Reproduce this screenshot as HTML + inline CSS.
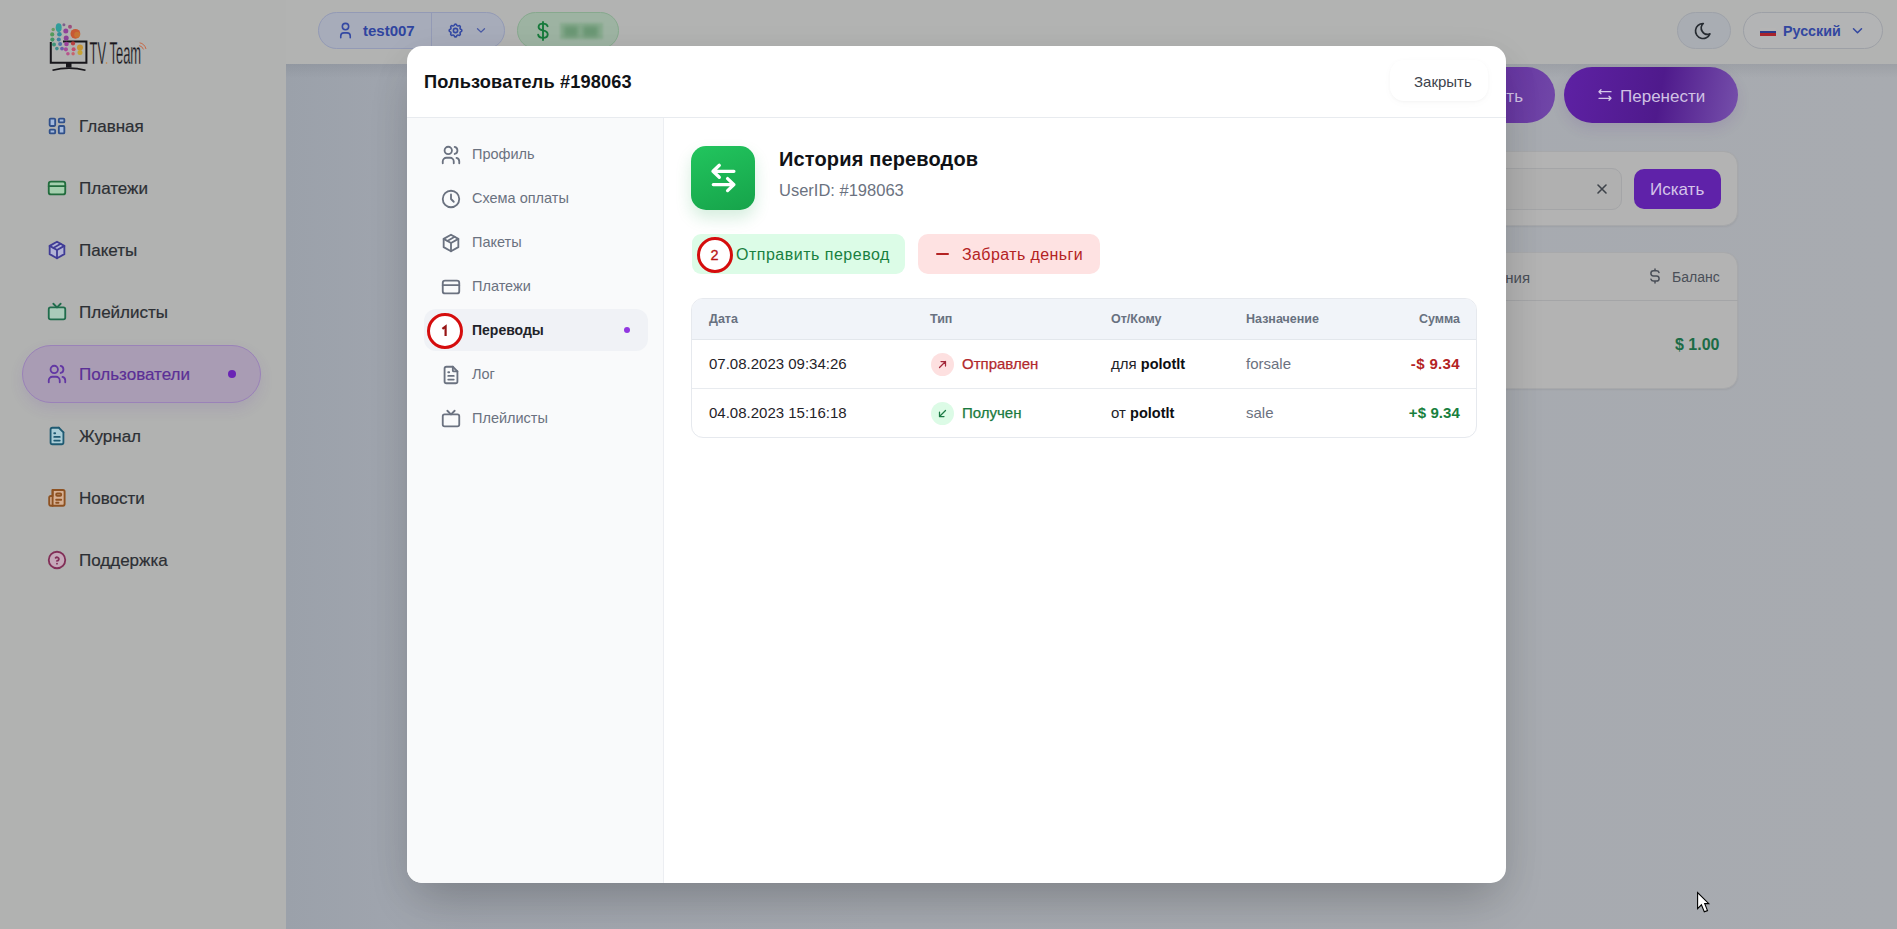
<!DOCTYPE html>
<html><head><meta charset="utf-8">
<style>
*{box-sizing:border-box;margin:0;padding:0}
html,body{width:1897px;height:929px;overflow:hidden}
body{font-family:"Liberation Sans",sans-serif;background:#a7aab0;position:relative}
.abs{position:absolute}
svg{display:block;overflow:visible}
#sidebar{left:0;top:0;width:286px;height:929px;background:#b1b2b1}
#header{left:286px;top:0;width:1611px;height:64px;background:#b2b3b2}
#main{left:286px;top:64px;width:1611px;height:865px;background:linear-gradient(90deg,#9ba1aa 0px,#a0a5ae 120px,#a5a9b0 600px,#a8abb0 1611px)}
.nav{position:absolute;left:46px;width:230px;height:22px;font-size:17px;color:#2c2f34;white-space:nowrap}
.nav svg{position:absolute;left:0;top:0}
.nav span{position:absolute;left:33px;top:2px;line-height:20px;-webkit-text-stroke:.2px currentColor}
.pill{position:absolute;border-radius:20px}
#modal{left:407px;top:46px;width:1099px;height:837px;background:#fff;border-radius:15px;box-shadow:0 25px 50px -12px rgba(0,0,0,.2),0 10px 40px rgba(0,0,0,.06);overflow:hidden}
.mnav{position:absolute;left:32.5px;width:210px;height:21px;font-size:14.5px;color:#6b7280;white-space:nowrap}
.mnav svg{position:absolute;left:0;top:0}
.mnav span{position:absolute;left:32.5px;top:0px;line-height:20px}
.th{position:absolute;top:12px;font-size:12.5px;font-weight:700;color:#687180;line-height:16px}
.td{position:absolute;font-size:15px;line-height:18px;white-space:nowrap}
</style></head>
<body>
<div id="main" class="abs">
  <div class="abs" style="left:0;top:0;width:1611px;height:14px;background:linear-gradient(rgba(60,65,75,.10),rgba(60,65,75,0))"></div>
  <!-- purple buttons -->
  <div class="abs" style="left:1080px;top:3px;width:189px;height:56px;border-radius:28px;background:linear-gradient(100deg,#5a1f9c 0%,#5b2199 40%,#7148a8 100%)"></div>
  <div class="abs" style="right:374px;top:22.5px;font-size:17px;color:#d0c2e4;line-height:20px">Добавить</div>
  <div class="abs" style="left:1278px;top:3px;width:174px;height:56px;border-radius:28px;background:linear-gradient(100deg,#5e21a4 0%,#4f1a8c 55%,#7650ab 100%);box-shadow:0 6px 14px rgba(80,30,140,.12)"></div>
  <svg class="abs" style="left:1311px;top:23px" width="16" height="16" viewBox="0 0 24 24" fill="none" stroke="#d4c6e8" stroke-width="2" stroke-linecap="round" stroke-linejoin="round"><path d="M21 7H3M6 10L3 7l3-3M3 17h18M18 20l3-3l-3-3"/></svg>
  <div class="abs" style="left:1334px;top:22.5px;font-size:17px;color:#d0c2e4;line-height:20px">Перенести</div>
  <!-- search card -->
  <div class="abs" style="left:1080px;top:87px;width:372px;height:75px;border-radius:14px;background:#b3b3b3;border:1px solid #a7a8aa;box-shadow:0 1px 2px rgba(0,0,0,.06)"></div>
  <div class="abs" style="left:1100px;top:104px;width:236px;height:42px;border-radius:10px;background:#b0b0b0;border:1px solid #a4a5a7"></div>
  <svg class="abs" style="left:1310px;top:119px" width="12" height="12" viewBox="0 0 12 12" fill="none" stroke="#3e434a" stroke-width="1.6" stroke-linecap="round"><path d="M2 2l8 8M10 2l-8 8"/></svg>
  <div class="abs" style="left:1348px;top:105px;width:87px;height:40px;border-radius:10px;background:#5f22a9"></div>
  <div class="abs" style="left:1364px;top:116px;font-size:17px;color:#d5c4ea;line-height:20px">Искать</div>
  <!-- table card -->
  <div class="abs" style="left:1080px;top:188px;width:372px;height:137px;border-radius:14px;background:#b3b3b3;border:1px solid #a8a9ab;box-shadow:0 1px 2px rgba(0,0,0,.06)"></div>
  <div class="abs" style="left:1080px;top:236px;width:372px;height:1px;background:#a4a5a7"></div>
  <div class="abs" style="right:367px;top:204px;font-size:15px;color:#4a4f58;line-height:20px">Назначения</div>
  <svg class="abs" style="left:1363px;top:204px" width="12" height="16" viewBox="0 0 12 16" fill="none" stroke="#4a4f58" stroke-width="1.5" stroke-linecap="round"><path d="M10 4.5a2.6 2.6 0 0 0-2.5-1.8h-3a2.6 2.6 0 0 0 0 5.2h3a2.6 2.6 0 0 1 0 5.2h-3A2.6 2.6 0 0 1 2 11.3M6 1v1.7m0 10.6V15"/></svg>
  <div class="abs" style="left:1386px;top:203px;font-size:14px;color:#4a4f58;line-height:20px">Баланс</div>
  <div class="abs" style="left:1389px;top:271px;font-size:16px;font-weight:700;color:#1c6b46;line-height:20px">$ 1.00</div>
</div>
<div id="header" class="abs">
  <!-- user pill -->
  <div class="abs" style="left:32px;top:12px;width:187px;height:37px;border-radius:19px;background:#a7acba;border:1px solid #939ab5"></div>
  <div class="abs" style="left:145px;top:13px;width:1px;height:35px;background:#939ab5"></div>
  <svg class="abs" style="left:50px;top:21px" width="19" height="19" viewBox="0 0 24 24" fill="none" stroke="#3449a3" stroke-width="2" stroke-linecap="round" stroke-linejoin="round"><circle cx="12" cy="7" r="4"/><path d="M6 21v-2a4 4 0 0 1 4-4h4a4 4 0 0 1 4 4v2"/></svg>
  <div class="abs" style="left:77px;top:21px;font-size:15px;font-weight:700;color:#2f449f;line-height:20px">test007</div>
  <svg class="abs" style="left:161px;top:22px" width="17" height="17" viewBox="0 0 24 24" fill="none" stroke="#3449a3" stroke-width="2.2" stroke-linecap="round" stroke-linejoin="round"><path d="M10.325 4.317c.426-1.756 2.924-1.756 3.35 0a1.724 1.724 0 0 0 2.573 1.066c1.543-.94 3.31.826 2.37 2.37a1.724 1.724 0 0 0 1.065 2.572c1.756.426 1.756 2.924 0 3.35a1.724 1.724 0 0 0-1.066 2.573c.94 1.543-.826 3.31-2.37 2.37a1.724 1.724 0 0 0-2.572 1.065c-.426 1.756-2.924 1.756-3.35 0a1.724 1.724 0 0 0-2.573-1.066c-1.543.94-3.31-.826-2.37-2.37a1.724 1.724 0 0 0-1.065-2.572c-1.756-.426-1.756-2.924 0-3.35a1.724 1.724 0 0 0 1.066-2.573c-.94-1.543.826-3.31 2.37-2.37c1 .608 2.296.07 2.572-1.065z"/><circle cx="12" cy="12" r="3"/></svg>
  <svg class="abs" style="left:190px;top:27px" width="10" height="7" viewBox="0 0 10 7" fill="none" stroke="#4a5aa5" stroke-width="1.3" stroke-linecap="round" stroke-linejoin="round"><path d="M1.5 1.8l3.5 3.3l3.5-3.3"/></svg>
  <!-- balance pill -->
  <div class="abs" style="left:231px;top:12px;width:102px;height:37px;border-radius:19px;background:#9db3a2;border:1px solid #87a98e"></div>
  <svg class="abs" style="left:250px;top:21px" width="14" height="20" viewBox="0 0 14 20" fill="none" stroke="#187a3c" stroke-width="1.9" stroke-linecap="round" stroke-linejoin="round"><path d="M11.6 5.2C11 3.5 9.4 2.6 7.1 2.6C4.4 2.6 2.6 3.9 2.6 5.9C2.6 8 4.4 8.8 7 9.4C9.8 10 11.7 10.9 11.7 13.3C11.7 15.5 9.7 16.9 7 16.9C4.4 16.9 2.6 15.8 2.2 13.8"/><path d="M7 1V19"/></svg>
  <div class="abs" style="left:274px;top:23px;width:43px;height:16px;background:#8aab90;filter:blur(1.2px)"></div>
  <div class="abs" style="left:278px;top:26px;width:14px;height:11px;background:#6a9774;filter:blur(2px)"></div>
  <div class="abs" style="left:297px;top:26px;width:15px;height:11px;background:#6a9774;filter:blur(2px)"></div>
  <!-- moon -->
  <div class="abs" style="left:1391px;top:12px;width:54px;height:37px;border-radius:19px;background:#a9adb3;border:1px solid #9ea2a9"></div>
  <svg class="abs" style="left:1407px;top:21px" width="20" height="20" viewBox="0 0 24 24" fill="none" stroke="#262b31" stroke-width="2" stroke-linecap="round" stroke-linejoin="round"><path d="M12 3c.132 0 .263 0 .393 0a7.5 7.5 0 0 0 7.92 12.446a9 9 0 1 1-8.313-12.454z"/></svg>
  <!-- lang -->
  <div class="abs" style="left:1457px;top:12px;width:140px;height:37px;border-radius:19px;background:#b3b4b5;border:1px solid #9da0a6"></div>
  <div class="abs" style="left:1474px;top:28px;width:16px;height:8px;background:linear-gradient(#b5b5b5 0 33%,#2b3a8a 33% 66%,#a8242c 66% 100%)"></div>
  <div class="abs" style="left:1497px;top:21px;font-size:14.3px;font-weight:700;color:#3247a0;line-height:20px">Русский</div>
  <svg class="abs" style="left:1566px;top:27px" width="11" height="8" viewBox="0 0 11 8" fill="none" stroke="#3247a0" stroke-width="1.5" stroke-linecap="round" stroke-linejoin="round"><path d="M1.5 1.8l4 4l4-4"/></svg>
</div>
<div id="sidebar" class="abs">
  <!-- logo -->
  <svg class="abs" style="left:0;top:0" width="160" height="80" viewBox="0 0 160 80">
    <path d="M50.8 42V62.8H86.4V41.4H63" fill="none" stroke="#17161b" stroke-width="2"/>
    <rect x="66" y="63" width="5.5" height="4.5" fill="#17161b"/>
    <path d="M52.5 70.3 Q69 66 85.5 70.3" fill="none" stroke="#17161b" stroke-width="1.6"/>
    <g opacity=".95">
      <circle cx="53.2" cy="29.5" r="1.7" fill="#6a9a60"/>
      <circle cx="52.2" cy="34.4" r="2.1" fill="#4f9a58"/>
      <circle cx="52.4" cy="39.6" r="2.1" fill="#3f9462"/>
      <circle cx="54" cy="44.6" r="2" fill="#3a9478"/>
      <circle cx="56.9" cy="48.6" r="1.8" fill="#3a8a8a"/>
      <ellipse cx="58.7" cy="27.6" rx="3" ry="4.4" fill="#2a9c9a"/>
      <circle cx="59.4" cy="34.3" r="2.3" fill="#2c8c9a"/>
      <circle cx="58.8" cy="39.5" r="2.1" fill="#3a7fa0"/>
      <circle cx="60.1" cy="44.1" r="2" fill="#4a6fa8"/>
      <circle cx="62" cy="48.6" r="1.9" fill="#6a5aa8"/>
      <circle cx="63.9" cy="24.8" r="1.5" fill="#7a5a8a"/>
      <circle cx="65.8" cy="31.1" r="2.5" fill="#8e3c98"/>
      <circle cx="66.2" cy="38.1" r="2.5" fill="#8a3a96"/>
      <circle cx="66.5" cy="44" r="2.3" fill="#9a3a98"/>
      <circle cx="65.9" cy="49.3" r="2.1" fill="#a8459a"/>
      <circle cx="67.9" cy="53.8" r="1.8" fill="#b8508a"/>
      <circle cx="70" cy="26.7" r="2" fill="#9a4a7a"/>
      <circle cx="75.4" cy="33.8" r="4.9" fill="#c9552e"/>
      <circle cx="77.2" cy="34.8" r="3" fill="#c8862e" opacity=".55"/>
      <circle cx="73" cy="43.4" r="2.1" fill="#b83a3a"/>
      <circle cx="73.6" cy="49.2" r="2" fill="#c44a6a"/>
      <circle cx="73.1" cy="53.8" r="1.7" fill="#c8606a"/>
      <circle cx="80" cy="47.4" r="3" fill="#c8942e"/>
      <circle cx="80" cy="52.6" r="2.5" fill="#c8a22e"/>
    </g>
    <text x="89.6" y="63.8" font-family="Liberation Sans" font-size="31" textLength="51.5" lengthAdjust="spacingAndGlyphs" fill="#17161b" stroke="#b1b2b1" stroke-width=".35">TV Team</text>
    <circle cx="106.5" cy="63" r=".8" fill="#c8803a"/>
    <path d="M139.2 45.6 q3 .6 4.3 3.8 M139.6 42.8 q5 .9 6.4 6.2" fill="none" stroke="#c8603a" stroke-width=".9"/>
  </svg>

  <div class="nav" style="top:115px">
    <svg width="22" height="22" viewBox="0 0 24 24" fill="none" stroke="#30508a" stroke-width="2" stroke-linecap="round" stroke-linejoin="round"><g fill="#a3b9dc"><rect x="4" y="4" width="6" height="8" rx="1"/><rect x="4" y="16" width="6" height="4" rx="1"/><rect x="14" y="12" width="6" height="8" rx="1"/><rect x="14" y="4" width="6" height="4" rx="1"/></g></svg>
    <span>Главная</span>
  </div>
  <div class="nav" style="top:177px">
    <svg width="22" height="22" viewBox="0 0 24 24" fill="none" stroke="#226c3d" stroke-width="2" stroke-linecap="round" stroke-linejoin="round"><rect x="3" y="5" width="18" height="14" rx="2.5" fill="#a4cfae"/><path d="M3 10h18"/></svg>
    <span>Платежи</span>
  </div>
  <div class="nav" style="top:239px">
    <svg width="22" height="22" viewBox="0 0 24 24" fill="none" stroke="#403c96" stroke-width="2" stroke-linecap="round" stroke-linejoin="round"><path d="M12 3l8 4.5v9l-8 4.5l-8-4.5v-9z" fill="#b2b3d6"/><path d="M12 12l8-4.5M12 12v9M12 12L4 7.5M16 5.25l-8 4.5"/></svg>
    <span>Пакеты</span>
  </div>
  <div class="nav" style="top:301px">
    <svg width="22" height="22" viewBox="0 0 24 24" fill="none" stroke="#206c4c" stroke-width="2" stroke-linecap="round" stroke-linejoin="round"><rect x="3" y="7" width="18" height="13" rx="2" fill="#aacbba"/><path d="M16 3l-4 4l-4-4"/></svg>
    <span>Плейлисты</span>
  </div>
  <div class="abs" style="left:22px;top:345px;width:239px;height:58px;border-radius:29px;background:#a99cb4;border:1px solid #9a82b8;box-shadow:0 6px 14px rgba(110,60,170,.12)"></div>
  <div class="nav" style="top:363px;color:#5b2f96">
    <svg width="22" height="22" viewBox="0 0 24 24" fill="none" stroke="#6237a3" stroke-width="2" stroke-linecap="round" stroke-linejoin="round"><circle cx="9" cy="7" r="4"/><path d="M3 21v-2a4 4 0 0 1 4-4h4a4 4 0 0 1 4 4v2"/><path d="M16 3.13a4 4 0 0 1 0 7.75"/><path d="M21 21v-2a4 4 0 0 0-3-3.85"/></svg>
    <span>Пользователи</span>
  </div>
  <div class="abs" style="left:228px;top:370px;width:8px;height:8px;border-radius:50%;background:#6a24b5"></div>
  <div class="nav" style="top:425px">
    <svg width="22" height="22" viewBox="0 0 24 24" fill="none" stroke="#1f5a72" stroke-width="2" stroke-linecap="round" stroke-linejoin="round"><path d="M14 3v4a1 1 0 0 0 1 1h4"/><path d="M17 21H7a2 2 0 0 1-2-2V5a2 2 0 0 1 2-2h7l5 5v11a2 2 0 0 1-2 2z" fill="#a9ccd6"/><path d="M9 9h1M9 13h6M9 17h6"/></svg>
    <span>Журнал</span>
  </div>
  <div class="nav" style="top:487px">
    <svg width="22" height="22" viewBox="0 0 22 22" fill="none" stroke="#8e5222" stroke-width="1.9" stroke-linecap="round" stroke-linejoin="round"><path d="M6.6 3H17a1.6 1.6 0 0 1 1.6 1.6V17.1a1.6 1.6 0 0 1-1.6 1.6H4.8a1.6 1.6 0 0 1-1.6-1.6V10.6a1.6 1.6 0 0 1 1.6-1.6H6.6z" fill="#d6b094"/><path d="M6.6 3V18.7"/><rect x="10.2" y="6.4" width="5" height="2.4" rx="1" fill="#c8a080"/><path d="M10.2 12.7h5M10.2 15.8h2.3"/></svg>
    <span>Новости</span>
  </div>
  <div class="nav" style="top:549px">
    <svg width="22" height="22" viewBox="0 0 24 24" fill="none" stroke="#822f58" stroke-width="2" stroke-linecap="round" stroke-linejoin="round"><circle cx="12" cy="12" r="9" fill="#c5a9b9"/><path d="M12 16v.01"/><path d="M12 13a2 2 0 0 0 .914-3.782a1.98 1.98 0 0 0-2.414.483"/></svg>
    <span>Поддержка</span>
  </div>
</div>
<div id="modal" class="abs">
  <div class="abs" style="left:17px;top:24px;font-size:18.2px;font-weight:700;color:#111317;line-height:24px;letter-spacing:.15px">Пользователь #198063</div>
  <div class="abs" style="left:983px;top:14px;width:98px;height:41px;border-radius:14px;background:#fff;box-shadow:0 1px 3px rgba(0,0,0,.03),0 2px 10px rgba(0,0,0,.025)"></div>
  <div class="abs" style="left:1007px;top:26px;font-size:15px;color:#3d434d;line-height:20px">Закрыть</div>
  <div class="abs" style="left:0;top:71px;width:1099px;height:1px;background:#e8ebef"></div>
  <!-- left nav -->
  <div class="abs" style="left:0;top:72px;width:257px;height:765px;background:#f9fafb;border-right:1px solid #eceef2"></div>
  <div class="abs" style="left:17px;top:263px;width:224px;height:42px;border-radius:12px;background:#f0f2f6"></div>
  <div class="mnav" style="top:98px"><svg width="22" height="22" viewBox="0 0 24 24" fill="none" stroke="#6b7280" stroke-width="2" stroke-linecap="round" stroke-linejoin="round"><circle cx="9" cy="7" r="4"/><path d="M3 21v-2a4 4 0 0 1 4-4h4a4 4 0 0 1 4 4v2"/><path d="M16 3.13a4 4 0 0 1 0 7.75"/><path d="M21 21v-2a4 4 0 0 0-3-3.85"/></svg><span>Профиль</span></div>
  <div class="mnav" style="top:142px"><svg width="22" height="22" viewBox="0 0 24 24" fill="none" stroke="#6b7280" stroke-width="2" stroke-linecap="round" stroke-linejoin="round"><circle cx="12" cy="12" r="9"/><path d="M12 7v5l3 3"/></svg><span>Схема оплаты</span></div>
  <div class="mnav" style="top:186px"><svg width="22" height="22" viewBox="0 0 24 24" fill="none" stroke="#6b7280" stroke-width="2" stroke-linecap="round" stroke-linejoin="round"><path d="M12 3l8 4.5v9l-8 4.5l-8-4.5v-9z"/><path d="M12 12l8-4.5M12 12v9M12 12L4 7.5M16 5.25l-8 4.5"/></svg><span>Пакеты</span></div>
  <div class="mnav" style="top:230px"><svg width="22" height="22" viewBox="0 0 24 24" fill="none" stroke="#6b7280" stroke-width="2" stroke-linecap="round" stroke-linejoin="round"><rect x="3" y="5" width="18" height="14" rx="2.5"/><path d="M3 10h18"/></svg><span>Платежи</span></div>
  <div class="mnav" style="top:274px"><span style="color:#1f2329;font-weight:700;font-size:14px;top:0px">Переводы</span></div>
  <div class="abs" style="left:217px;top:281px;width:6px;height:6px;border-radius:50%;background:#9137e0"></div>
  <div class="mnav" style="top:318px"><svg width="22" height="22" viewBox="0 0 24 24" fill="none" stroke="#6b7280" stroke-width="2" stroke-linecap="round" stroke-linejoin="round"><path d="M14 3v4a1 1 0 0 0 1 1h4"/><path d="M17 21H7a2 2 0 0 1-2-2V5a2 2 0 0 1 2-2h7l5 5v11a2 2 0 0 1-2 2z"/><path d="M9 9h1M9 13h6M9 17h6"/></svg><span>Лог</span></div>
  <div class="mnav" style="top:362px"><svg width="22" height="22" viewBox="0 0 24 24" fill="none" stroke="#6b7280" stroke-width="2" stroke-linecap="round" stroke-linejoin="round"><rect x="3" y="7" width="18" height="13" rx="2"/><path d="M16 3l-4 4l-4-4"/></svg><span>Плейлисты</span></div>
  <!-- annotation 1 -->
  <div class="abs" style="left:20px;top:266.5px;width:36px;height:36px;border-radius:50%;border:3.7px solid #d50d0d;background:#fff"></div>
  <svg class="abs" style="left:0;top:0" width="60" height="300" viewBox="0 0 60 300"><path d="M35.4 282.9L38.6 280.4V290" fill="none" stroke="#971515" stroke-width="2.2" stroke-linecap="butt" stroke-linejoin="miter"/></svg>

  <!-- content -->
  <div class="abs" style="left:284px;top:100px;width:64px;height:64px;border-radius:15px;background:linear-gradient(160deg,#22c55e,#16a34a);box-shadow:0 8px 16px rgba(22,163,74,.18)"></div>
  <svg class="abs" style="left:284px;top:100px" width="64" height="64" viewBox="0 0 64 64" fill="none" stroke="#fff" stroke-width="3.3" stroke-linecap="round" stroke-linejoin="round"><path d="M42.9 25.3H22M28.3 19.3L22 25.3L28.3 31.3M22.3 38.6H42.9M36.6 32.6L42.9 38.6L36.6 44.6"/></svg>
  <div class="abs" style="left:372px;top:101px;font-size:20px;font-weight:700;color:#101216;line-height:24px;letter-spacing:.15px">История переводов</div>
  <div class="abs" style="left:372px;top:134px;font-size:16.5px;color:#6b7280;line-height:20px">UserID: #198063</div>

  <div class="abs" style="left:285px;top:188px;width:213px;height:40px;border-radius:9px;background:#dcfce7"></div>
  <div class="abs" style="left:329px;top:199px;font-size:16px;color:#19803f;line-height:20px;letter-spacing:.5px">Отправить перевод</div>
  <div class="abs" style="left:511px;top:188px;width:182px;height:40px;border-radius:10px;background:#fee2e2"></div>
  <div class="abs" style="left:529px;top:207px;width:13px;height:2px;background:#b42323;border-radius:1px"></div>
  <div class="abs" style="left:555px;top:199px;font-size:16px;color:#b42323;line-height:20px;letter-spacing:.4px">Забрать деньги</div>
  <!-- annotation 2 -->
  <div class="abs" style="left:289.5px;top:190.5px;width:36px;height:36px;border-radius:50%;border:3.7px solid #d50d0d;background:#fff"></div>
  <div class="abs" style="left:289.5px;top:199.5px;width:36px;text-align:center;font-size:14.5px;color:#b81616;line-height:18px;-webkit-text-stroke:.3px #b81616">2</div>

  <!-- table -->
  <div class="abs" style="left:284px;top:252px;width:786px;height:140px;border-radius:12px;border:1px solid #e6e9ee;overflow:hidden;background:#fff">
    <div class="abs" style="left:0;top:0;width:786px;height:41px;background:#f1f4f9;border-bottom:1px solid #e3e7ec"></div>
    <div class="abs" style="left:0;top:89px;width:786px;height:1px;background:#e8ebef"></div>
    <div class="th" style="left:17px">Дата</div>
    <div class="th" style="left:238px">Тип</div>
    <div class="th" style="left:419px">От/Кому</div>
    <div class="th" style="left:554px">Назначение</div>
    <div class="th" style="right:16px">Сумма</div>

    <div class="td" style="left:17px;top:56px;color:#1f2329">07.08.2023 09:34:26</div>
    <div class="abs" style="left:239px;top:54px;width:23px;height:23px;border-radius:50%;background:#fde0e0"></div>
    <svg class="abs" style="left:245px;top:60px" width="11" height="11" viewBox="0 0 11 11" fill="none" stroke="#a3283a" stroke-width="1.25" stroke-linecap="round" stroke-linejoin="round"><path d="M2.5 8.5l6-6M4 2.5h4.5V7"/></svg>
    <div class="td" style="left:270px;top:56px;color:#b2292d;-webkit-text-stroke:.25px #b2292d">Отправлен</div>
    <div class="td" style="left:419px;top:56px;color:#1f2329">для <b style="color:#0d0f12;font-size:14.5px">polotlt</b></div>
    <div class="td" style="left:554px;top:56px;color:#6b7280">forsale</div>
    <div class="td" style="right:16px;top:56px;color:#b42323;font-weight:700;letter-spacing:.35px">-$ 9.34</div>

    <div class="td" style="left:17px;top:105px;color:#1f2329">04.08.2023 15:16:18</div>
    <div class="abs" style="left:239px;top:103px;width:23px;height:23px;border-radius:50%;background:#dcfbe6"></div>
    <svg class="abs" style="left:245px;top:109px" width="11" height="11" viewBox="0 0 11 11" fill="none" stroke="#1c7a45" stroke-width="1.25" stroke-linecap="round" stroke-linejoin="round"><path d="M8.5 2.5l-6 6M2.5 4v4.5H7"/></svg>
    <div class="td" style="left:270px;top:105px;color:#1a7a40;-webkit-text-stroke:.25px #1a7a40">Получен</div>
    <div class="td" style="left:419px;top:105px;color:#1f2329">от <b style="color:#0d0f12;font-size:14.5px">polotlt</b></div>
    <div class="td" style="left:554px;top:105px;color:#6b7280">sale</div>
    <div class="td" style="right:16px;top:105px;color:#17803d;font-weight:700;letter-spacing:.1px">+$ 9.34</div>
  </div>
</div>
<svg class="abs" style="left:1696px;top:891px" width="14" height="22" viewBox="0 0 14 22"><path d="M1.6 1.6V17.6L5.4 13.8L8.3 20.8L11.5 19.6L8.7 12.6H12.8Z" fill="#fff" stroke="#000" stroke-width="1.1" stroke-linejoin="miter"/></svg>
</body></html>
